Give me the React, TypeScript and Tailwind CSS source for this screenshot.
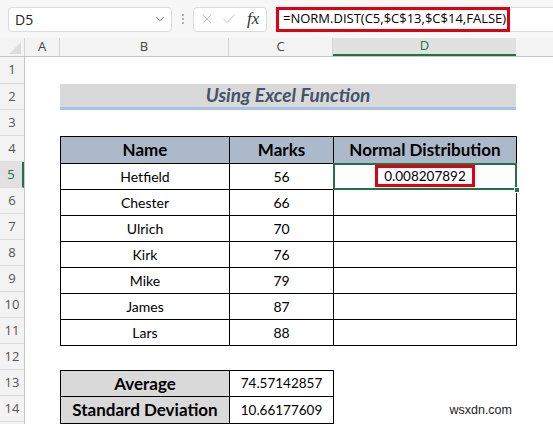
import React from "react";
import { ChevronDown, X, Check } from "lucide-react";

const rows = [
  { name: "Hetfield", marks: 56, dist: "0.008207892" },
  { name: "Chester", marks: 66, dist: "" },
  { name: "Ulrich", marks: 70, dist: "" },
  { name: "Kirk", marks: 76, dist: "" },
  { name: "Mike", marks: 79, dist: "" },
  { name: "James", marks: 87, dist: "" },
  { name: "Lars", marks: 88, dist: "" },
];

const rowHeights = [27, 26, 26, 26, 26, 26, 26, 26, 26, 26, 26, 26, 26, 26];

function TopBar() {
  return (
    <div className="flex h-[38px] items-center bg-[#f7f7f7] pl-2 font-['Open_Sans',sans-serif]">
      <div className="flex h-[25px] w-[164px] items-center justify-between rounded-[4px] border border-[#dcdcdc] bg-white pl-[6px] pr-[4px] text-[14px] text-[#222]">
        <span>D5</span>
        <ChevronDown className="h-[14px] w-[14px] text-[#555]" strokeWidth={1.5} />
      </div>
      <div className="flex w-[21px] flex-col items-center gap-[2px]">
        <span className="h-[2px] w-[2px] rounded-full bg-[#999]" />
        <span className="h-[2px] w-[2px] rounded-full bg-[#999]" />
        <span className="h-[2px] w-[2px] rounded-full bg-[#999]" />
      </div>
      <div className="flex h-[25px] w-[74px] items-center rounded-[4px] border border-[#dcdcdc] bg-white pl-[5px]">
        <X className="h-[16px] w-[16px] text-[#b5b5b5]" strokeWidth={1.2} />
        <Check className="ml-[6px] h-[16px] w-[16px] text-[#b5b5b5]" strokeWidth={1.2} />
        <span className="ml-[10px] font-['Liberation_Serif',serif] text-[17px] italic text-[#333]">fx</span>
      </div>
      <div className="ml-[9px] flex h-[25px] flex-1 items-center rounded-l-[4px] border border-r-0 border-[#dcdcdc] bg-white">
        <div className="-ml-px flex h-[25px] w-[234px] items-center whitespace-nowrap border-[3px] border-[#e0000f] pl-[4px] text-[13px] text-black">
          =NORM.DIST(C5,$C$13,$C$14,FALSE)
        </div>
      </div>
    </div>
  );
}

function ColumnHeaders() {
  const cols = [
    { l: "A", w: "w-[35px]" },
    { l: "B", w: "w-[169px]" },
    { l: "C", w: "w-[104px]" },
  ];
  return (
    <div className="flex h-[19px] border-b border-[#c6c6c6] bg-[#f3f3f3] font-['Open_Sans',sans-serif] text-[13px] text-[#444]">
      <div className="relative w-[25px] border-r border-[#d6d6d6]">
        <svg className="absolute bottom-[2px] right-[3px]" width="12" height="12" viewBox="0 0 12 12">
          <polygon points="12,0 12,12 0,12" fill="#dcdcdc" />
        </svg>
      </div>
      {cols.map((c) => (
        <div key={c.l} className={`${c.w} flex items-center justify-center border-r border-[#d6d6d6]`}>
          {c.l}
        </div>
      ))}
      <div className="flex w-[183px] items-center justify-center border-b-2 border-[#217346] bg-[#e1e1e1] text-[#217346]">
        D
      </div>
      <div className="flex-1" />
    </div>
  );
}

function RowHeaders() {
  return (
    <div className="flex h-[367px] w-[25px] flex-col border-r border-[#c6c6c6] bg-[#f3f3f3] font-['Open_Sans',sans-serif] text-[13px] text-[#555]">
      {rowHeights.map((h, i) => (
        <div
          key={i}
          style={{ height: h }}
          className={
            i === 4
              ? "flex shrink-0 items-center justify-center border-b border-r-2 border-b-[#dcdcdc] border-r-[#217346] bg-[#e1e1e1] text-[#217346]"
              : "flex shrink-0 items-center justify-center border-b border-[#dcdcdc]"
          }
        >
          {i + 1}
        </div>
      ))}
    </div>
  );
}

function Sheet() {
  return (
    <div className="flex-1 pl-[35px] font-['Lato',sans-serif] text-[14px] text-black">
      <div className="h-[27px]" />
      <div className="flex h-[26px] w-[456px] items-center justify-center border-b-[3px] border-[#a8c3df] bg-[#d9d9d9] text-[19px] font-bold italic text-[#44546a]">
        Using Excel Function
      </div>
      <div className="h-[26px]" />
      <table className="border-collapse">
        <thead>
          <tr className="h-[26px] bg-[#acb9ca] text-[17px] font-bold">
            <th className="w-[169px] border border-black p-0">Name</th>
            <th className="w-[104px] border border-black p-0">Marks</th>
            <th className="w-[183px] border border-black p-0">Normal Distribution</th>
          </tr>
        </thead>
        <tbody>
          {rows.map((r, i) => (
            <tr key={r.name} className="h-[26px]">
              <td className="border border-black p-0 text-center">{r.name}</td>
              <td className="border border-black p-0 text-center">{r.marks}</td>
              <td className="relative border border-black p-0 text-center">
                {i === 0 && (
                  <>
                    <span className="inline-block h-[22px] w-[100px] border-[3px] border-[#e0000f] text-[13.5px] leading-[16px]">
                      {r.dist}
                    </span>
                    <span className="absolute -inset-px border-2 border-[#217346]" />
                    <span className="absolute -bottom-[4px] -right-[4px] h-[6px] w-[6px] border border-white bg-[#217346]" />
                  </>
                )}
              </td>
            </tr>
          ))}
        </tbody>
      </table>
      <div className="h-[24px]" />
      <table className="border-collapse">
        <tbody>
          <tr className="h-[26px]">
            <td className="w-[169px] border border-black bg-[#d9d9d9] p-0 text-center text-[17px] font-bold">Average</td>
            <td className="w-[104px] border border-black p-0 text-center text-[13.5px]">74.57142857</td>
          </tr>
          <tr className="h-[26px]">
            <td className="border border-black bg-[#d9d9d9] p-0 text-center text-[17px] font-bold">Standard Deviation</td>
            <td className="border border-black p-0 text-center text-[13.5px]">10.66177609</td>
          </tr>
        </tbody>
      </table>
    </div>
  );
}

export default function App() {
  return (
    <div className="relative h-[424px] w-[553px] overflow-hidden bg-white">
      <TopBar />
      <ColumnHeaders />
      <div className="flex">
        <RowHeaders />
        <Sheet />
      </div>
      <span className="absolute bottom-[4px] right-[41px] font-['Liberation_Sans',sans-serif] text-[12.5px] text-[#222]">
        wsxdn.com
      </span>
    </div>
  );
}
